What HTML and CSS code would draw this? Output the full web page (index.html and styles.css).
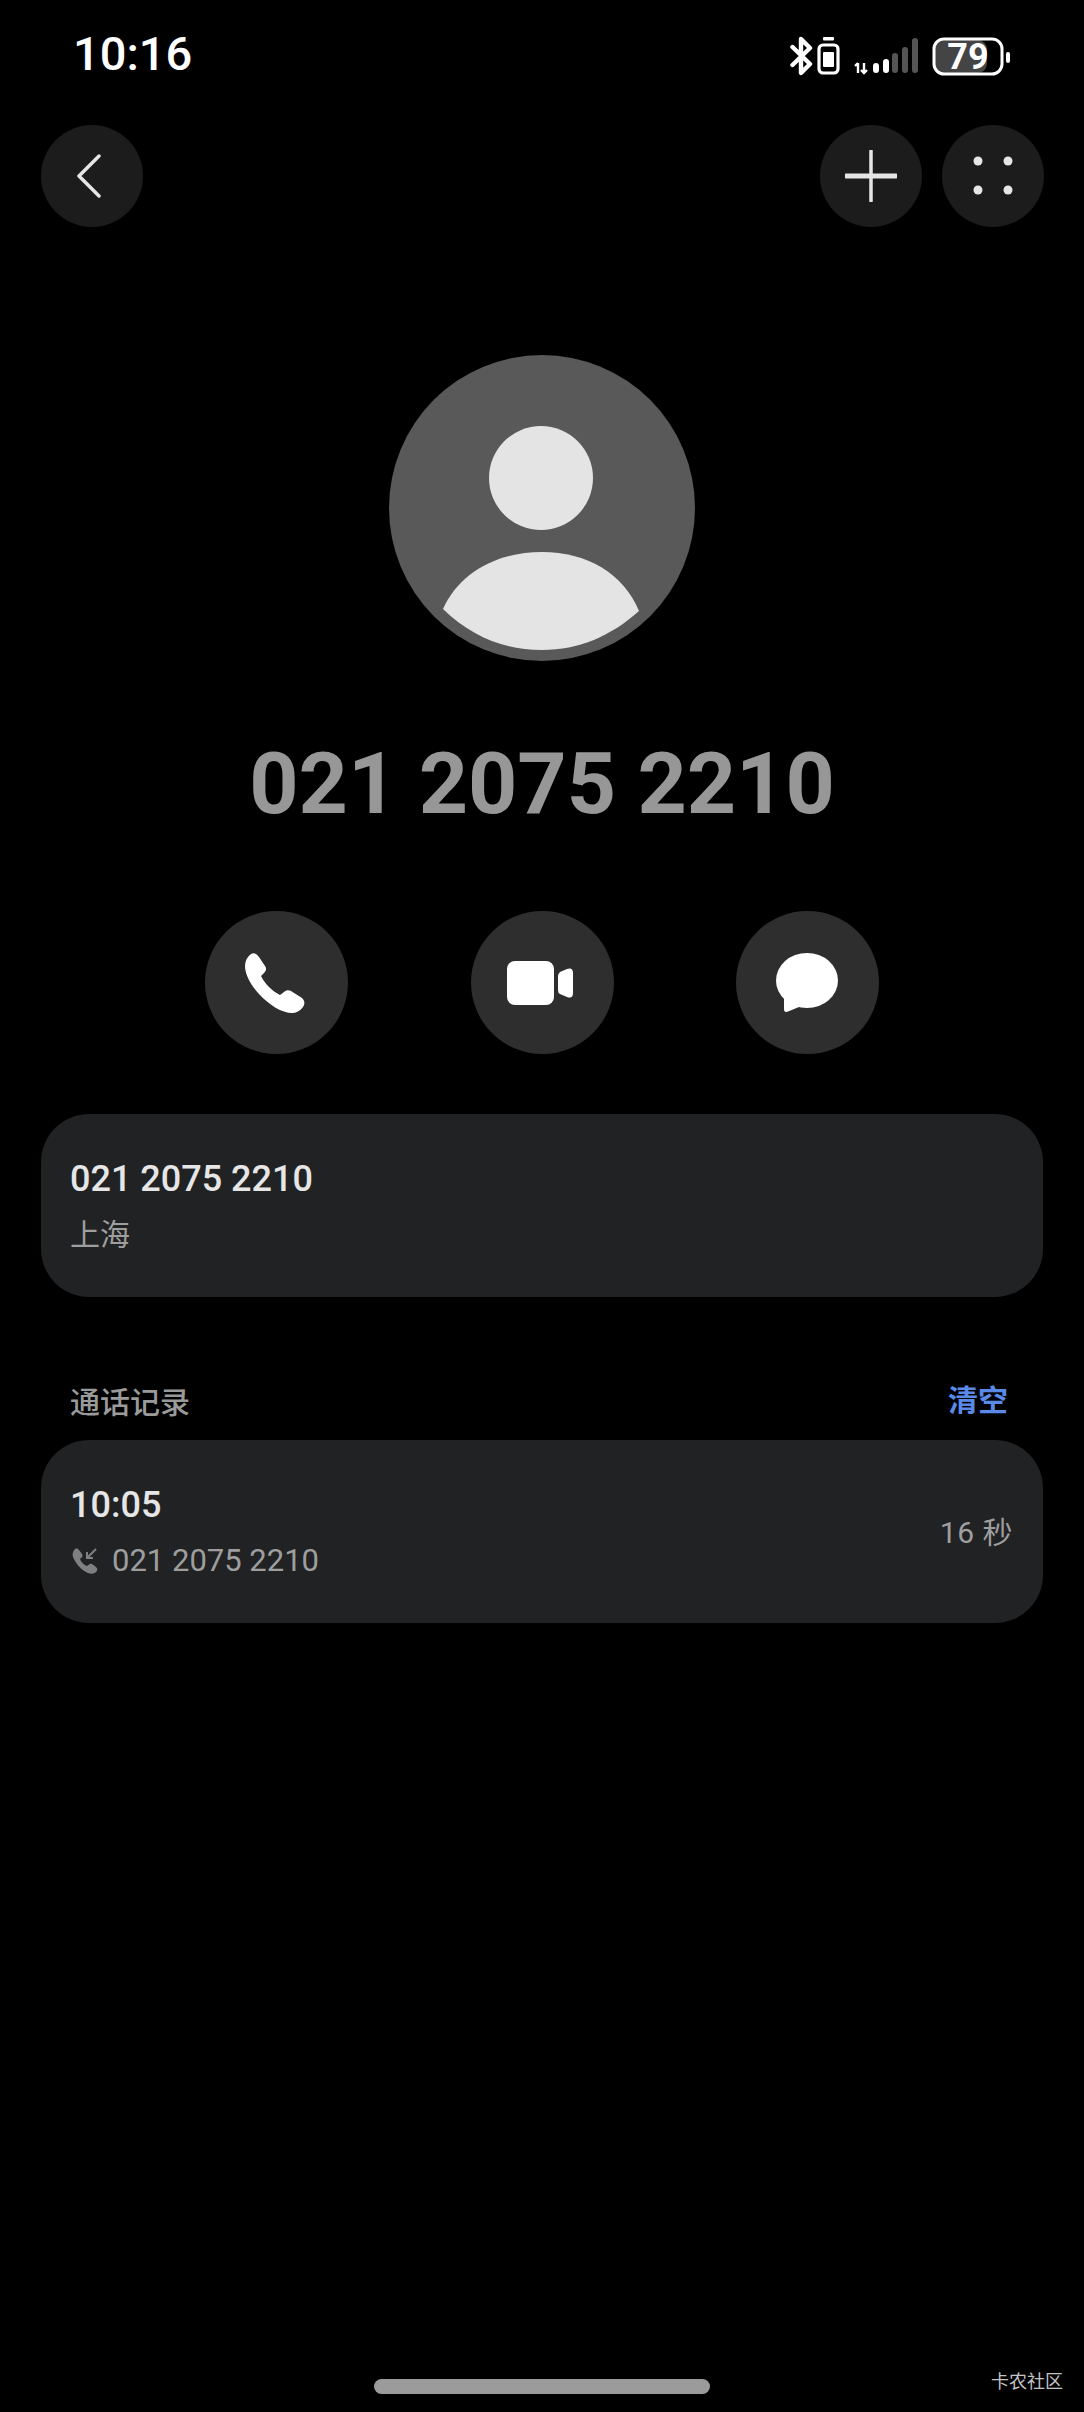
FILE: index.html
```html
<!DOCTYPE html>
<html lang="zh-CN">
<head>
<meta charset="utf-8">
<title>通话详情</title>
<link rel="stylesheet" href="styles.css">
</head>
<body>
<div class="page">
  <header class="status">
    <span class="clock">10:16</span>
    <svg class="status-icons" width="222" height="46" viewBox="0 0 222 46">
      <g fill="none" stroke="#fff" stroke-linejoin="round" stroke-linecap="round">
        <path stroke-width="4.4" d="M2.500 11 L20 28 L11 37 V3 L20 12 L2.500 29"/>
        <rect stroke-width="3.200" x="29" y="9" width="19" height="28" rx="4"/>
      </g>
      <rect x="33" y="1" width="11" height="3.500" rx="1" fill="#fff"/>
      <rect x="33" y="16" width="11" height="15" rx="1" fill="#fff"/>
      <g fill="none" stroke="#fff" stroke-width="2.400">
        <path d="M68 37 V27 M65 30 L68 27"/>
        <path d="M74 27 V37 M71 34 L74 37 L77 34"/>
      </g>
      <rect x="83" y="27" width="6" height="10" rx="3" fill="#fff"/>
      <rect x="93" y="23" width="6" height="14" rx="3" fill="#fff"/>
      <rect x="102" y="17" width="6" height="20" rx="3" fill="#555"/>
      <rect x="112" y="11" width="6" height="26" rx="3" fill="#555"/>
      <rect x="122" y="2" width="6" height="35" rx="3" fill="#555"/>
      <rect x="145" y="4" width="52" height="33" rx="9" fill="#444"/>
      <rect x="144" y="3" width="68" height="35" rx="10" fill="none" stroke="#fff" stroke-width="3"/>
      <rect x="216" y="16" width="4" height="11" rx="2" fill="#fff"/>
      <text class="batt-text" x="178" y="33" text-anchor="middle">79</text>
    </svg>
  </header>

  <nav class="topbar">
    <button class="round-btn">
      <svg class="back-icon" width="26" height="44" viewBox="0 0 26 44"><path d="M23 2 L3 22 L23 42" class="line-thin"/></svg>
    </button>
    <div class="top-right">
      <button class="round-btn">
        <svg width="52" height="52" viewBox="0 0 52 52"><path d="M26 1 V51" class="line-thin"/><path d="M1 26 H51" class="line-thick"/></svg>
      </button>
      <button class="round-btn">
        <svg width="40" height="40" viewBox="0 0 40 40" fill="#e6e6e6"><circle cx="5" cy="5" r="4.5"/><circle cx="35" cy="5" r="4.5"/><circle cx="5" cy="34" r="4.5"/><circle cx="35" cy="34" r="4.5"/></svg>
      </button>
    </div>
  </nav>

  <svg class="avatar" width="306" height="306" viewBox="0 0 306 306">
    <circle cx="153" cy="153" r="153" fill="#595959"/>
    <circle cx="152" cy="123" r="52" fill="#e4e4e4"/>
    <path d="M54 254 C70 218 108 197 153 197 C198 197 234 218 250 256 C222 281 190 295 153 295 C114 295 82 281 54 254 Z" fill="#e4e4e4"/>
  </svg>

  <h1 class="title">021 2075 2210</h1>

  <div class="actions">
    <button class="action-btn">
      <svg class="icon-phone" width="60" height="60" viewBox="0 0 60 60" fill="#fff"><path d="M6 1 C9 -1 12 1 14 4 L20 13 C22 16 21 18 19 20 L16 23 C20 31 27 38 35 42 L39 39 C41 37 44 37 46 38 L57 45 C60 48 60 51 58 54 C55 58 51 60 47 60 C37 60 24 52 14 41 C5 31 0 21 0 13 C0 8 2 4 6 1 Z"/></svg>
    </button>
    <button class="action-btn">
      <svg class="icon-video" width="66" height="44" viewBox="0 0 66 44" fill="#fff"><rect width="47" height="44" rx="8"/><path d="M51 15 Q51 13 53 11 L60 8 Q66 6 66 12 V32 Q66 38 60 36 L53 33 Q51 32 51 29 Z"/></svg>
    </button>
    <button class="action-btn">
      <svg class="icon-chat" width="62" height="60" viewBox="0 0 62 60" fill="#fff"><ellipse cx="31" cy="27.5" rx="31" ry="27.5"/><path d="M8 42 L8 56 Q8 60 12 58.500 L28 52 Z"/></svg>
    </button>
  </div>

  <section class="card card-info">
    <div class="primary">021 2075 2210</div>
    <div class="secondary">上海</div>
  </section>

  <div class="section-head">
    <span class="section-title">通话记录</span>
    <span class="clear">清空</span>
  </div>

  <section class="card card-log">
    <div>
      <div class="primary">10:05</div>
      <div class="secondary log-line">
        <svg width="26" height="26" viewBox="0 0 26 26"><path fill="#808080" d="M3 1 C5 0 6 1 7 2 L10 6 C11 8 10.500 9 9 10 L8 11 C9 14 12 17 15 18 L17 16.500 C18 15.500 19 15.500 20 16 L24 19 C26 21 25.500 23 24 24 C22 26 19 26 16 25 C9 22 4 16 1 9 C0 6 1 3 3 1 Z"/><path fill="none" stroke="#808080" stroke-width="2" d="M24 1 L15 10 M15 4 V10 H21"/></svg>
        <span>021 2075 2210</span>
      </div>
    </div>
    <span class="duration">16 秒</span>
  </section>

  <div class="home-bar"></div>
  <span class="watermark">卡农社区</span>
</div>
</body>
</html>
```

FILE: styles.css
```css
* { box-sizing: border-box; }
html, body { margin: 0; padding: 0; background: #000; }
.page {
  position: relative;
  width: 1084px;
  height: 2412px;
  padding: 0 41px;
  display: flex;
  flex-direction: column;
  overflow: hidden;
  font-family: Roboto, "Noto Sans CJK SC", sans-serif;
  color: #e6e6e6;
}
button { border: 0; padding: 0; margin: 0; display: flex; align-items: center; justify-content: center; }

.status {
  height: 125px;
  flex: none;
  display: flex;
  justify-content: space-between;
  align-items: flex-start;
  padding: 27px 31px 0 32px;
}
.clock { font-size: 47px; line-height: 54px; font-weight: 500; color: #fff; }
.status-icons { margin-top: 9px; }
.batt-text { font: 700 36px Roboto, sans-serif; fill: #fff; }

.topbar { display: flex; justify-content: space-between; flex: none; }
.top-right { display: flex; gap: 20px; margin-right: -1px; }
.round-btn { width: 102px; height: 102px; border-radius: 50%; background: #1c1c1c; }
.back-icon { margin-right: 7px; }
.line-thin { fill: none; stroke: #e6e6e6; stroke-width: 3.5; stroke-linecap: round; stroke-linejoin: round; }
.line-thick { fill: none; stroke: #e6e6e6; stroke-width: 5; stroke-linecap: round; }

.avatar { display: block; flex: none; margin: 128px auto 0; }

.title {
  margin: 73px 0 0;
  font-size: 86px;
  line-height: 100px;
  font-weight: 700;
  text-align: center;
  color: #979797;
}

.actions { display: flex; justify-content: center; gap: 122.5px; margin-top: 77px; flex: none; }
.action-btn { width: 143px; height: 143px; border-radius: 50%; background: #2e2e2e; }
.icon-phone { margin-right: 3px; }
.icon-video { margin-right: 4px; }
.icon-chat { margin-right: 2px; }

.card { flex: none; height: 183px; background: #212224; border-radius: 48px; padding: 0 29px; }
.card-info { margin-top: 60px; display: flex; flex-direction: column; justify-content: center; padding-top: 2px; }
.card-log { display: flex; align-items: center; justify-content: space-between; padding-right: 30px; padding-top: 2px; }
.primary { font-size: 36px; line-height: 44px; font-weight: 500; color: #e6e6e6; }
.secondary { font-size: 30px; line-height: 44px; margin-top: 12px; color: #9e9e9e; }
.log-line { display: flex; align-items: center; gap: 14px; font-size: 31px; padding-left: 2px; }
.duration { font-size: 30px; line-height: 44px; color: #9e9e9e; letter-spacing: 0.5px; }

.section-head {
  display: flex;
  justify-content: space-between;
  align-items: center;
  height: 60px;
  margin-top: 72px;
  margin-bottom: 11px;
  padding: 0 35px 0 29px;
  flex: none;
}
.section-title { font-size: 30px; color: #9a9a9a; font-weight: 500; padding-top: 1px; }
.clear { font-size: 30px; color: #5a8ae8; font-weight: 700; padding-bottom: 2px; }

.home-bar {
  flex: none;
  width: 336px;
  height: 15px;
  margin: auto auto 18px;
  border-radius: 8px;
  background: #9b9b9b;
}
.watermark {
  position: absolute;
  right: 21px;
  bottom: 17px;
  font-size: 18px;
  line-height: 26px;
  color: #c4c4c4;
}
```
